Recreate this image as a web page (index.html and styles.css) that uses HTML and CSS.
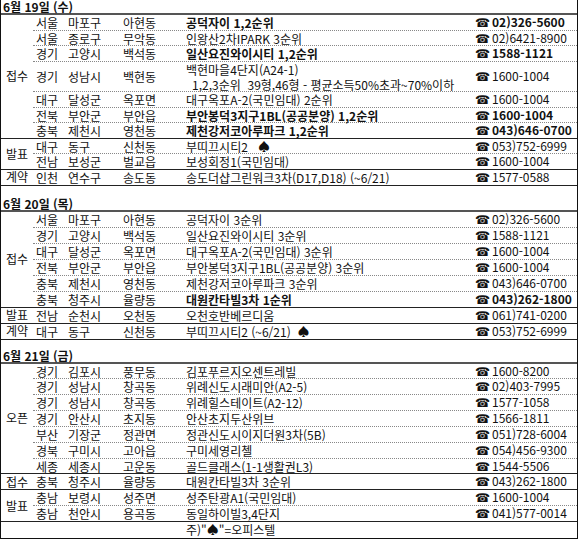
FILE: index.html
```html
<!DOCTYPE html>
<html lang="ko">
<head>
<meta charset="utf-8">
<title>청약 일정</title>
<link rel="stylesheet" href="styles.css">
</head>
<body>
<div class="sheet">

  <section class="day s1">
    <div class="day-head">6월 19일 (수)</div>
    <div class="group">
      <div class="cat">접수</div>
      <div class="rows">
        <div class="row b"><span>서울</span><span>마포구</span><span>아현동</span><span>공덕자이 1,2순위</span><span class="tel"><i>☎</i>02)326-5600</span></div>
        <div class="row"><span>서울</span><span>종로구</span><span>무악동</span><span>인왕산2차IPARK 3순위</span><span class="tel"><i>☎</i>02)6421-8900</span></div>
        <div class="row b"><span>경기</span><span>고양시</span><span>백석동</span><span>일산요진와이시티 1,2순위</span><span class="tel"><i>☎</i>1588-1121</span></div>
        <div class="row double"><span>경기</span><span>성남시</span><span>백현동</span><span class="two"><span>백현마을4단지(A24-1)</span><span class="sub">1,2,3순위&nbsp; 39형,46형 - 평균소득50%초과~70%이하</span></span><span class="tel"><i>☎</i>1600-1004</span></div>
        <div class="row"><span>대구</span><span>달성군</span><span>옥포면</span><span>대구옥포A-2(국민임대) 2순위</span><span class="tel"><i>☎</i>1600-1004</span></div>
        <div class="row b"><span>전북</span><span>부안군</span><span>부안읍</span><span>부안봉덕3지구1BL(공공분양) 1,2순위</span><span class="tel"><i>☎</i>1600-1004</span></div>
        <div class="row b"><span>충북</span><span>제천시</span><span>영천동</span><span>제천강저코아루파크 1,2순위</span><span class="tel"><i>☎</i>043)646-0700</span></div>
      </div>
    </div>
    <div class="group">
      <div class="cat">발표</div>
      <div class="rows">
        <div class="row"><span>대구</span><span>동구</span><span>신천동</span><span>부띠끄시티2&nbsp;&nbsp; ♠</span><span class="tel"><i>☎</i>053)752-6999</span></div>
        <div class="row"><span>전남</span><span>보성군</span><span>벌교읍</span><span>보성회정1(국민임대)</span><span class="tel"><i>☎</i>1600-1004</span></div>
      </div>
    </div>
    <div class="group">
      <div class="cat">계약</div>
      <div class="rows">
        <div class="row"><span>인천</span><span>연수구</span><span>송도동</span><span>송도더샵그린워크3차(D17,D18) (~6/21)</span><span class="tel"><i>☎</i>1577-0588</span></div>
      </div>
    </div>
  </section>

  <div class="gap g1"></div>

  <section class="day s2">
    <div class="day-head">6월 20일 (목)</div>
    <div class="group">
      <div class="cat">접수</div>
      <div class="rows">
        <div class="row"><span>서울</span><span>마포구</span><span>아현동</span><span>공덕자이 3순위</span><span class="tel"><i>☎</i>02)326-5600</span></div>
        <div class="row"><span>경기</span><span>고양시</span><span>백석동</span><span>일산요진와이시티 3순위</span><span class="tel"><i>☎</i>1588-1121</span></div>
        <div class="row"><span>대구</span><span>달성군</span><span>옥포면</span><span>대구옥포A-2(국민임대) 3순위</span><span class="tel"><i>☎</i>1600-1004</span></div>
        <div class="row"><span>전북</span><span>부안군</span><span>부안읍</span><span>부안봉덕3지구1BL(공공분양) 3순위</span><span class="tel"><i>☎</i>1600-1004</span></div>
        <div class="row"><span>충북</span><span>제천시</span><span>영천동</span><span>제천강저코아루파크 3순위</span><span class="tel"><i>☎</i>043)646-0700</span></div>
        <div class="row b"><span>충북</span><span>청주시</span><span>율량동</span><span>대원칸타빌3차 1순위</span><span class="tel"><i>☎</i>043)262-1800</span></div>
      </div>
    </div>
    <div class="group">
      <div class="cat">발표</div>
      <div class="rows">
        <div class="row"><span>전남</span><span>순천시</span><span>오천동</span><span>오천호반베르디움</span><span class="tel"><i>☎</i>061)741-0200</span></div>
      </div>
    </div>
    <div class="group">
      <div class="cat">계약</div>
      <div class="rows">
        <div class="row"><span>대구</span><span>동구</span><span>신천동</span><span>부띠끄시티2 (~6/21)&nbsp; ♠</span><span class="tel"><i>☎</i>053)752-6999</span></div>
      </div>
    </div>
  </section>

  <div class="gap g2"></div>

  <section class="day s3">
    <div class="day-head">6월 21일 (금)</div>
    <div class="group">
      <div class="cat">오픈</div>
      <div class="rows">
        <div class="row"><span>경기</span><span>김포시</span><span>풍무동</span><span>김포푸르지오센트레빌</span><span class="tel"><i>☎</i>1600-8200</span></div>
        <div class="row"><span>경기</span><span>성남시</span><span>창곡동</span><span>위례신도시래미안(A2-5)</span><span class="tel"><i>☎</i>02)403-7995</span></div>
        <div class="row"><span>경기</span><span>성남시</span><span>창곡동</span><span>위례힐스테이트(A2-12)</span><span class="tel"><i>☎</i>1577-1058</span></div>
        <div class="row"><span>경기</span><span>안산시</span><span>초지동</span><span>안산초지두산위브</span><span class="tel"><i>☎</i>1566-1811</span></div>
        <div class="row"><span>부산</span><span>기장군</span><span>정관면</span><span>정관신도시이지더원3차(5B)</span><span class="tel"><i>☎</i>051)728-6004</span></div>
        <div class="row"><span>경북</span><span>구미시</span><span>고아읍</span><span>구미세영리첼</span><span class="tel"><i>☎</i>054)456-9300</span></div>
        <div class="row"><span>세종</span><span>세종시</span><span>고운동</span><span>골드클래스(1-1생활권L3)</span><span class="tel"><i>☎</i>1544-5506</span></div>
      </div>
    </div>
    <div class="group">
      <div class="cat">접수</div>
      <div class="rows">
        <div class="row"><span>충북</span><span>청주시</span><span>율량동</span><span>대원칸타빌3차 3순위</span><span class="tel"><i>☎</i>043)262-1800</span></div>
      </div>
    </div>
    <div class="group">
      <div class="cat">발표</div>
      <div class="rows">
        <div class="row"><span>충남</span><span>보령시</span><span>성주면</span><span>성주탄광A1(국민임대)</span><span class="tel"><i>☎</i>1600-1004</span></div>
        <div class="row"><span>충남</span><span>천안시</span><span>용곡동</span><span>동일하이빌3,4단지</span><span class="tel"><i>☎</i>041)577-0014</span></div>
      </div>
    </div>
    <div class="note">주)"♠"=오피스텔</div>
  </section>

</div>
</body>
</html>
```

FILE: styles.css
```css
* { box-sizing: border-box; }

html, body {
  margin: 0;
  padding: 0;
  background: #fff;
}

body {
  font-family: "Noto Sans CJK KR", "Noto Sans", sans-serif;
  font-size: 12px;
  color: #111;
  width: 580px;
  height: 540px;
  overflow: hidden;
}

.sheet {
  width: 578px;
  border-left: 1px solid #111;
  border-right: 1px solid #111;
  border-bottom: 1px solid #111;
}

.day { --rh: 16px; }
.s1 { --rh: 15.6px; }
.s3 { --rh: 15.85px; }

.day-head {
  height: 15px;
  line-height: 13px;
  padding: 0 0 0 2px;
  font-weight: bold;
  border-bottom: 2px solid #555;
}

.g1 { height: 11px; }
.g2 { height: 9px; }

.group {
  display: flex;
  border-bottom: 1px solid #222;
}

.cat {
  width: 32px;
  flex: none;
  display: flex;
  align-items: center;
  justify-content: center;
  line-height: 14px;
}

.rows { flex: 1; }

.row {
  display: grid;
  grid-template-columns: 35px 55px 63px 289px 1fr;
  align-items: center;
  height: var(--rh);
  line-height: 13px;
  border-bottom: 1px dotted #888;
  white-space: nowrap;
}

.row > span:first-child { padding-left: 3px; }

.row:last-child {
  border-bottom: none;
  height: calc(var(--rh) - 1px);
}

.row.double { height: calc(var(--rh) * 2 - 1px); }

.two {
  display: flex;
  flex-direction: column;
  line-height: 15px;
}

.two .sub { padding-left: 6px; }

.row.b > span:nth-child(4),
.row.b > .tel { font-weight: bold; }

.tel i {
  font-style: normal;
  font-family: "DejaVu Sans", sans-serif;
  font-size: 12px;
  display: inline-block;
  width: 17px;
  font-weight: normal;
}

.note {
  height: var(--rh);
  line-height: 13px;
  padding: 1px 0 0 185px;
}
```
